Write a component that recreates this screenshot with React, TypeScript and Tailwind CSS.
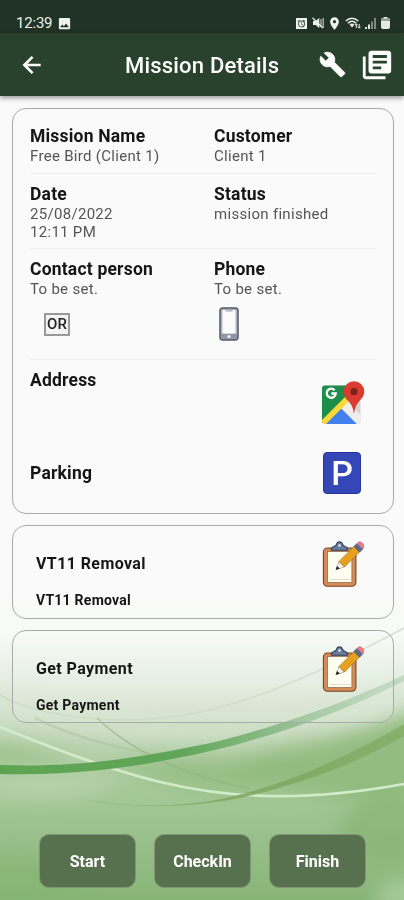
import React from 'react';
import { MdAlarm, MdImage, MdLibraryBooks, MdLocationOn } from 'react-icons/md';

interface Task {
    id: number;
    title: string;
    subtitle: string;
}

const tasks: Task[] = [
    { id: 1, title: 'VT11 Removal', subtitle: 'VT11 Removal' },
    { id: 2, title: 'Get Payment', subtitle: 'Get Payment' },
];

const actions = ['Start', 'CheckIn', 'Finish'];

const Backdrop = () => (
    <svg className="absolute inset-x-0 bottom-0 w-full h-[320px]" viewBox="0 580 404 320" fill="none">
        <defs>
            <linearGradient id="base" x1="0" y1="580" x2="0" y2="900" gradientUnits="userSpaceOnUse">
                <stop offset="0" stopColor="#fafafa" />
                <stop offset="0.16" stopColor="#f8faf7" />
                <stop offset="0.3" stopColor="#e6efe3" />
                <stop offset="0.42" stopColor="#d2e1cc" />
                <stop offset="0.52" stopColor="#b9d2ae" />
                <stop offset="0.66" stopColor="#a6c998" />
                <stop offset="0.84" stopColor="#96be88" />
                <stop offset="1" stopColor="#87b576" />
            </linearGradient>
            <linearGradient id="stripe" x1="0" y1="0" x2="404" y2="0" gradientUnits="userSpaceOnUse">
                <stop offset="0" stopColor="#5da451" />
                <stop offset="0.45" stopColor="#61a659" />
                <stop offset="0.75" stopColor="#9ac39a" />
                <stop offset="1" stopColor="#c3d9c2" />
            </linearGradient>
            <linearGradient id="olive" x1="70" y1="0" x2="404" y2="0" gradientUnits="userSpaceOnUse">
                <stop offset="0" stopColor="#83a85e" />
                <stop offset="0.6" stopColor="#7fa660" />
                <stop offset="1" stopColor="#83ae68" />
            </linearGradient>
            <filter id="soft" x="-30%" y="-30%" width="160%" height="160%">
                <feGaussianBlur stdDeviation="9" />
            </filter>
            <filter id="edge" x="-10%" y="-30%" width="120%" height="160%">
                <feGaussianBlur stdDeviation="0.5" />
            </filter>
        </defs>
        <rect y="580" width="404" height="320" fill="url(#base)" />
        <g filter="url(#soft)">
            <path d="M225 765C280 745 350 745 420 705V800C340 805 270 790 225 765Z" fill="#8db97a" opacity="0.85" />
            <path d="M-20 745C20 742 45 755 85 764H-20Z" fill="#94be82" opacity="0.8" />
            <path d="M110 765C160 755 220 758 290 760C330 780 270 795 240 793C190 790 150 780 110 765Z" fill="#92bc80" opacity="0.8" />
            <ellipse cx="42" cy="786" rx="70" ry="12" fill="#b9d3ac" opacity="0.8" />
            <ellipse cx="390" cy="830" rx="50" ry="32" fill="#82b26f" opacity="0.6" />
            <ellipse cx="10" cy="885" rx="70" ry="28" fill="#86b573" opacity="0.6" />
            <ellipse cx="405" cy="897" rx="30" ry="18" fill="#b2d1a6" opacity="0.7" />
            <path d="M-10 690C70 755 230 760 404 700V680C260 740 110 720 -10 690Z" fill="#d5e4cf" opacity="0.6" />
        </g>
        <g filter="url(#edge)">
            <path d="M0 695C35 716 110 725 170 717C230 710 300 684 404 628" stroke="#c4d6bd" strokeWidth="1.5" opacity="0.7" />
            <path d="M35 718C75 738 125 750 160 755" stroke="#aec5a1" strokeWidth="2.5" opacity="0.6" />
            <path d="M97 718C130 750 180 774 250 789" stroke="#93b27e" strokeWidth="1.2" opacity="0.75" />
            <path d="M0 727C55 749 107 769 160 782C235 800 310 801 404 784" stroke="#d2ebcb" strokeWidth="2.7" />
            <path d="M72 797C115 806 160 808 205 802C280 789 345 758 404 724V736C352 766 295 786 235 799C180 809 120 808 72 797Z" fill="url(#olive)" opacity="0.85" />
            <path d="M0 765C80 768 145 757 215 742C285 724 344 703 404 675V681C344 711 285 733 215 750C145 766 80 776 0 774Z" fill="url(#stripe)" />
        </g>
    </svg>
);

const BackIcon = () => (
    <svg className="w-[26px] h-[26px]" viewBox="0 0 24 24" fill="none" stroke="currentColor" strokeWidth="2.5">
        <path d="M20 12H5.5M12.5 4.5L5 12l7.5 7.5" />
    </svg>
);

const WrenchIcon = () => (
    <svg className="w-[27px] h-[27px]" viewBox="0 0 24 24" fill="currentColor" stroke="currentColor" strokeWidth="0.8" strokeLinejoin="round">
        <path d="M22.7 19l-9.1-9.1c.9-2.3.4-5-1.5-6.9-2-2-5-2.4-7.4-1.3L9 6 6 9 1.6 4.7C.4 7.1.9 10.1 2.9 12.1c1.9 1.9 4.6 2.4 6.9 1.5l9.1 9.1c.4.4 1 .4 1.4 0l2.3-2.3c.5-.4.5-1.1.1-1.4z" />
    </svg>
);

const PhoneIcon = () => (
    <svg className="w-5 h-[34px]" viewBox="0 0 20 34">
        <rect x="1" y="1" width="18" height="32" rx="3" fill="#c4c8d4" stroke="#525663" strokeWidth="1.5" />
        <rect x="3" y="2.5" width="14" height="24.5" rx="1" fill="#fbfbfd" stroke="#8e92a0" strokeWidth="0.7" />
        <path d="M6.5 3h7v1.6h-7z" fill="#b4b6c2" />
        <path d="M2 27h16v3a2 2 0 0 1-2 2H4a2 2 0 0 1-2-2z" fill="#9295a5" />
        <circle cx="10" cy="29.5" r="1.6" fill="#f4f4f8" />
    </svg>
);

const MapsIcon = () => (
    <svg className="w-[43px] h-[43px]" viewBox="0 0 43 43">
        <defs>
            <clipPath id="tile">
                <rect x="0" y="4.5" width="38.5" height="38.5" rx="3" />
            </clipPath>
        </defs>
        <g clipPath="url(#tile)">
            <path d="M0 4h39v39H0z" fill="#d5d5d3" />
            <path d="M0 4h27v14L0 43z" fill="#1d8d49" />
            <path d="M0 39L23 16l4 6L4 43H0z" fill="#fdd835" />
            <path d="M4 43L19.5 27.5L35 43z" fill="#4180ed" />
            <path d="M19.5 27.5L26 21L39 34v9h-4z" fill="#eeeeec" />
        </g>
        <path d="M12.6 9.2A4.5 4.5 0 1 0 13.7 12.5H9.3" fill="none" stroke="#fff" strokeWidth="2.4" />
        <path d="M32 0.3A10.3 10.3 0 0 0 21.7 10.6C21.7 19 30.8 20 31.8 32h.6C33.2 20 42.3 19 42.3 10.6A10.3 10.3 0 0 0 32 .3Z" fill="#dc3b30" />
        <circle cx="32" cy="10.7" r="3.6" fill="#7d231e" />
    </svg>
);

const ClipboardIcon = () => (
    <svg className="w-[42px] h-[46px]" viewBox="0 0 42 46">
        <rect x="1.4" y="7" width="32.5" height="38.2" rx="4" fill="#d48b57" stroke="#744629" strokeWidth="1.1" />
        <rect x="5.5" y="10.5" width="24.4" height="31" fill="#fffdf0" stroke="#957052" strokeWidth="0.8" />
        <path d="M8 38.5h20" stroke="#e3dccb" strokeWidth="1" />
        <path d="M9.5 9.3V7.5C9.5 5.6 13.5 6 14.5 3.5C15.2 0 19.8 0 20.6 3.5C21.5 6 25.5 5.6 25.5 7.5V9.3Z" fill="#667d9d" stroke="#34435c" strokeWidth="1.1" />
        <circle cx="17.5" cy="4.5" r="1.3" fill="#e7edf3" />
        <path d="M14.3 28.5L17 20.5L22.5 26Z" fill="#fffaf0" stroke="#8b827c" strokeWidth="0.6" />
        <path d="M13.6 29L14.9 25L18 27.5Z" fill="#24252c" />
        <path d="M17 20.5L33 4.7L38.4 10.1L22.5 26Z" fill="#eba51f" stroke="#9c651f" strokeWidth="0.7" />
        <path d="M19 22.5L35 6.6M20.8 24.3L36.8 8.3" stroke="#cf8c1d" strokeWidth="0.6" />
        <path d="M32 5.5L35 2.5L40.6 8.1L37.6 11.1Z" fill="#586c92" stroke="#3e4c69" strokeWidth="0.7" />
        <path d="M35 2.5L36.3 1.2C38.7-.6 43.3 3.7 41.7 6.7L40.6 8.1Z" fill="#f17c88" stroke="#a7525e" strokeWidth="0.5" />
    </svg>
);

const MutedIcon = () => (
    <svg className="w-3 h-3" viewBox="0 0 12 12" fill="none" stroke="#e9eee9">
        <path d="M1 4h2.8L7.3.8v10.4L3.8 8H1z" fill="#e9eee9" stroke="none" />
        <path d="M9 2v8M11.2 1v10" strokeWidth="1.2" opacity="0.8" />
        <path d="M.5.8L10.8 11" strokeWidth="1.3" />
    </svg>
);

const WifiIcon = () => (
    <svg className="w-4 h-3" viewBox="0 0 16 12" fill="none" stroke="#e9eee9">
        <path d="M.8 4C4.5.2 9.5.2 13.2 4M2.8 6.2C5.6 3.6 8.4 3.6 11.2 6.2" strokeWidth="1.5" />
        <path d="M5 7.2L7 10L9 7.2Z" fill="#e9eee9" />
        <path d="M11.3 11V7M10 8.3l1.3-1.5 1.3 1.5M14.2 7v4M12.9 9.7l1.3 1.5 1.3-1.5" strokeWidth="1" />
    </svg>
);

const SignalIcon = () => (
    <svg className="w-[11px] h-[11px]" viewBox="0 0 11 11">
        <path d="M0 9h2v2H0zM3 6.5h2V11H3z" fill="#e1e7e1" />
        <path d="M6 3.5h2V11H6zM9 0h2v11H9z" fill="#7c8a7e" />
    </svg>
);

const BatteryIcon = () => (
    <svg className="w-[9px] h-3" viewBox="0 0 9 12">
        <path d="M2.5 0h4v1.5H9V10a2 2 0 0 1-2 2H2a2 2 0 0 1-2-2V1.5h2.5z" fill="#e4ebe4" />
        <path d="M0 1.5h9V4H0z" fill="#93a195" />
    </svg>
);

const Field: React.FC<{ label: string; lines: string[] }> = ({ label, lines }) => (
    <div>
        <h3 className="text-[17.5px] leading-5 font-bold tracking-[0.2px] text-[#151515]">{label}</h3>
        {lines.map(line => (
            <p key={line} className="text-[15px] leading-[18px] tracking-[0.3px] text-[#555] pt-px -mb-px">{line}</p>
        ))}
    </div>
);

const App: React.FC = () => {
    return (
        <div className="relative w-[404px] h-[900px] overflow-hidden bg-[#fafafa] font-[Roboto,sans-serif] text-[#151515]">
            <Backdrop />
            <div className="relative flex flex-col h-full">
                <div className="h-[33px] shrink-0 bg-[#203326] flex items-center justify-between pl-4 pr-[14px] pt-[13px] text-[#eef2ee]">
                    <div className="flex items-center gap-[5px]">
                        <span className="text-[15px] leading-4 tracking-[-0.2px]">12:39</span>
                        <MdImage size={15} />
                    </div>
                    <div className="flex items-center">
                        <span className="w-[11px] h-[11px] bg-[#eef2ee] text-[#203326] flex items-center justify-center"><MdAlarm size={9} /></span>
                        <span className="ml-[5px]"><MutedIcon /></span>
                        <MdLocationOn size={15} className="ml-[3px]" />
                        <span className="ml-[3px]"><WifiIcon /></span>
                        <span className="ml-[4px]"><SignalIcon /></span>
                        <span className="ml-[5px]"><BatteryIcon /></span>
                    </div>
                </div>

                <header className="h-[63px] shrink-0 bg-[#29422d] flex items-center px-[10px] text-[#fdfdfb] shadow-[0_2px_5px_rgba(0,0,0,0.4)]">
                    <button className="w-11 flex justify-center"><BackIcon /></button>
                    <h1 className="ml-[71px] w-[194px] pt-0.5 text-[22px] font-medium tracking-[0.2px] whitespace-nowrap">Mission Details</h1>
                    <button><WrenchIcon /></button>
                    <button className="ml-[14px]"><MdLibraryBooks size={34} /></button>
                </header>

                <main className="pl-3 pr-[10px] pt-3 flex flex-col gap-[11px]">
                    <section className="h-[406px] rounded-[14px] border border-[#aaa] px-[17px] pt-[17px]">
                        <div className="h-[48px] grid grid-cols-[184px_1fr] border-b border-[#f1f1f1]">
                            <Field label="Mission Name" lines={['Free Bird (Client 1)']} />
                            <Field label="Customer" lines={['Client 1']} />
                        </div>
                        <div className="h-[75px] pt-[10px] grid grid-cols-[184px_1fr] border-b border-[#f1f1f1]">
                            <Field label="Date" lines={['25/08/2022', '12:11 PM']} />
                            <Field label="Status" lines={['mission finished']} />
                        </div>
                        <div className="h-[111px] pt-[10px] grid grid-cols-[184px_1fr] border-b border-[#efefef]">
                            <div>
                                <Field label="Contact person" lines={['To be set.']} />
                                <span className="mt-[16px] ml-[14px] w-[26px] h-[23px] border-2 border-[#999] bg-[#f4f4f4] flex items-center justify-center text-[15px] font-medium text-[#222]">OR</span>
                            </div>
                            <div>
                                <Field label="Phone" lines={['To be set.']} />
                                <div className="mt-[10px] ml-[5px]"><PhoneIcon /></div>
                            </div>
                        </div>
                        <div className="h-[72px] flex justify-between pr-[11px]">
                            <h3 className="pt-[10px] text-[17.5px] leading-5 font-bold tracking-[0.2px]">Address</h3>
                            <div className="pt-[21px]"><MapsIcon /></div>
                        </div>
                        <div className="h-[82px] flex items-center justify-between pr-[15px]">
                            <h3 className="text-[17.5px] leading-5 font-bold tracking-[0.2px]">Parking</h3>
                            <span className="w-[38px] h-[42px] rounded-[4px] bg-[#3546b7] border border-[#25349d] flex items-center justify-center text-[34px] leading-none font-medium text-white">P</span>
                        </div>
                    </section>

                    {tasks.map(task => (
                        <section key={task.id} className={`${task.id === 1 ? 'h-[94px]' : 'h-[93px]'} rounded-[14px] border border-[#aaa] bg-white/10 pl-[23px] pr-[29px] flex justify-between`}>
                            <div className="pt-[28px]">
                                <h3 className="text-[16px] leading-5 font-bold tracking-[0.4px]">{task.title}</h3>
                                <p className="mt-[17px] text-[14px] leading-[18px] font-bold tracking-[0.25px]">{task.subtitle}</p>
                            </div>
                            <div className="pt-[15px]"><ClipboardIcon /></div>
                        </section>
                    ))}
                </main>

                <footer className="mt-auto mb-3 pl-[39px] flex gap-[18px]">
                    {actions.map(action => (
                        <button key={action} className="w-[97px] h-[54px] pt-0.5 rounded-[10px] border border-[#829578] bg-[#57704d] text-[16px] font-bold text-white">{action}</button>
                    ))}
                </footer>
            </div>
        </div>
    );
};

export default App;
